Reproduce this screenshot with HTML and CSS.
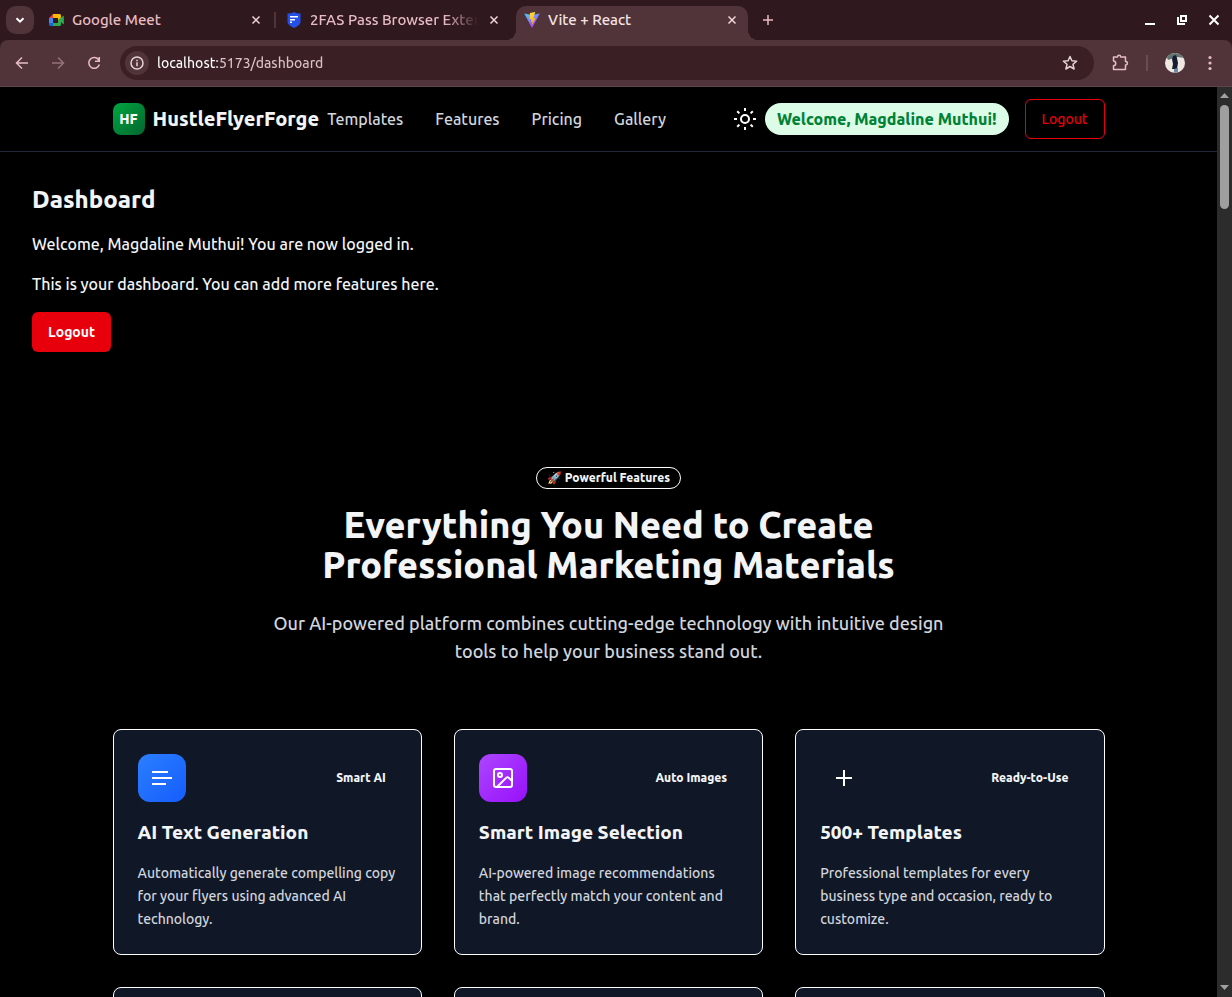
FILE: index.html
```html
<!DOCTYPE html>
<html lang="en">
<head>
<meta charset="utf-8">
<title>Vite + React</title>
<link rel="stylesheet" href="styles.css">
</head>
<body>
<div class="window">
  <div class="tabstrip">
    <button class="tab-search" aria-label="Search tabs"><svg width="12" height="12" viewBox="0 0 12 12"><path d="M2.500 4.200 6 7.700 9.500 4.200" class="line bold"/></svg></button>
    <div class="tabs" role="tablist">
      <div class="tab" role="tab">
        <svg width="16" height="16" viewBox="0 0 16 16"><path fill="#ea4335" d="M1 6 5 2v4z"/><path fill="#fbbc04" d="M5 2h6.500q1.500 0 1.500 1.500V7l-3 2V6H5z"/><path fill="#4285f4" d="M1 6h4v5H1z"/><path fill="#1967d2" d="M1 11h4v3H2.500Q1 14 1 12.500z"/><path fill="#34a853" d="M5 11h5V8l3-2.500V12.500Q13 14 11.500 14H5zM13 6l2-2q.8-.5.8.5v7q0 1-.8.5l-2-2z"/></svg>
        <span class="tab-title">Google Meet</span>
        <button class="tab-close" aria-label="Close tab"><svg width="16" height="16" viewBox="0 0 16 16"><path class="line" d="m4.500 4.500 7 7m0-7-7 7"/></svg></button>
      </div>
      <div class="tab divided" role="tab">
        <svg width="16" height="16" viewBox="0 0 16 16"><path fill="#2450e8" d="M8 0q2 1.500 6.500 1.500V10q0 3-6.500 6-6.500-3-6.500-6V1.500Q6 1.500 8 0z"/><path fill="#fff" d="M4 4h8v1.500H4zM4 7h5v1.500H4zM4 9.500h2V11H4z"/></svg>
        <span class="tab-title faded">2FAS Pass Browser Extension</span>
        <button class="tab-close" aria-label="Close tab"><svg width="16" height="16" viewBox="0 0 16 16"><path class="line" d="m4.500 4.500 7 7m0-7-7 7"/></svg></button>
      </div>
      <div class="tab active" role="tab" aria-selected="true">
        <svg width="16" height="16" viewBox="0 0 16 16"><defs><linearGradient id="va" x1="0" y1="0" x2=".6" y2="1"><stop offset="0" stop-color="#41d1ff"/><stop offset="1" stop-color="#bd34fe"/></linearGradient><linearGradient id="vb" x1="0" y1="0" x2="0" y2="1"><stop offset="0" stop-color="#ffdd35"/><stop offset="1" stop-color="#ffa800"/></linearGradient></defs><path fill="url(#va)" d="M.3 1.500 8 3l7.800-1.500L8 16z"/><path fill="url(#vb)" d="M11.300 0 6 1l-.6 6.300 2-.4L7 10l1.300-.4L8 13l3.500-7-2.200.3z"/></svg>
        <span class="tab-title">Vite + React</span>
        <button class="tab-close" aria-label="Close tab"><svg width="16" height="16" viewBox="0 0 16 16"><path class="line" d="m4.500 4.500 7 7m0-7-7 7"/></svg></button>
      </div>
    </div>
    <button class="tab-new" aria-label="New tab"><svg width="16" height="16" viewBox="0 0 16 16"><path class="line" d="M8 3v10M3 8h10"/></svg></button>
    <div class="window-buttons">
      <button aria-label="Minimize"><svg width="16" height="16" viewBox="0 0 16 16"><path fill="#fff" d="M3 11h10v2H3z"/></svg></button>
      <button aria-label="Restore"><svg width="16" height="16" viewBox="0 0 16 16"><path fill="none" stroke="#fff" stroke-width="2" d="M7 4h5v5H7z"/><path fill="#fff" d="M3 5h2v6h6v2H3z"/></svg></button>
      <button aria-label="Close"><svg width="16" height="16" viewBox="0 0 16 16"><path stroke="#fff" stroke-width="2" d="m3.500 3.500 9 9m0-9-9 9"/></svg></button>
    </div>
  </div>
  <div class="toolbar">
    <div class="history">
      <button aria-label="Back"><svg width="16" height="16" viewBox="0 0 16 16"><path class="line" d="M14 8H2.500m5.500-5.500L2.500 8 8 13.500"/></svg></button>
      <button aria-label="Forward" disabled><svg width="16" height="16" viewBox="0 0 16 16"><path class="line" d="M2 8h11.500M8 2.500 13.500 8 8 13.500"/></svg></button>
      <button aria-label="Reload"><svg width="16" height="16" viewBox="0 0 16 16"><path class="line" d="M12.800 5A5.400 5.400 0 1 0 13.400 9.500M13.300 2v4.200H9"/></svg></button>
    </div>
    <div class="omnibox">
      <button class="site-info" aria-label="Site information"><svg width="16" height="16" viewBox="0 0 16 16"><circle class="line" cx="8" cy="8" r="6"/><path class="line" d="M8 7.300V11.200M8 4.800v1.500"/></svg></button>
      <input class="address" type="text" aria-label="Address" value="localhost:5173/dashboard">
      <button aria-label="Bookmark this page"><svg width="16" height="16" viewBox="0 0 16 16"><path class="line" stroke-linejoin="round" d="m8 1.500 1.900 4.300 4.700.4L11 9.300l1.100 4.700L8 11.500 3.900 14 5 9.300 1.400 6.200l4.700-.4z"/></svg></button>
    </div>
    <div class="toolbar-end">
      <button aria-label="Extensions"><svg width="18" height="18" viewBox="0 0 18 18"><path class="line" stroke-linejoin="round" d="M2.500 3H6.500C6.500.8 9.700.8 9.700 3H14.500V7.600C17 7.600 17 11 14.500 11V15.500H2.500V11.700C5.500 11.500 5.500 7.300 2.500 7z"/></svg></button>
      <span class="toolbar-rule"></span>
      <button aria-label="Profile"><svg width="20" height="20" viewBox="0 0 20 20"><defs><clipPath id="face"><circle cx="10" cy="10" r="10"/></clipPath></defs><g clip-path="url(#face)"><path fill="#efe8e1" d="M0 0h20v20H0z"/><path fill="#62746f" d="M0 0h20v5L12 4 3 7z"/><path fill="#161d31" d="m8 3 3-1 1 3 1 5-1 6H7l1-5-1-5z"/><path fill="#708ba0" d="m9 16 4-1v5H9z"/></g></svg></button>
      <button aria-label="Menu"><svg width="16" height="16" viewBox="0 0 16 16"><g fill="#e8bcc4"><circle cx="8" cy="2.500" r="1.600"/><circle cx="8" cy="8" r="1.600"/><circle cx="8" cy="13.500" r="1.600"/></g></svg></button>
    </div>
  </div>
  <div class="viewport">
    <div class="page">
      <header class="site-header">
        <div class="container header-row">
          <a class="brand" href="#"><span class="brand-mark">HF</span><span class="brand-name">HustleFlyerForge</span></a>
          <nav class="site-nav"><a href="#">Templates</a><a href="#">Features</a><a href="#">Pricing</a><a href="#">Gallery</a></nav>
          <div class="account">
            <button class="theme" aria-label="Toggle theme"><svg width="24" height="24" viewBox="0 0 24 24" fill="none" stroke="#fff" stroke-width="2"><circle cx="12" cy="12" r="4"/><path d="M12 1v3M12 20v3M1 12h3M20 12h3M4.200 4.200l2.200 2.200M17.600 17.600l2.200 2.200M4.200 19.800l2.200-2.200M17.600 6.400l2.200-2.200"/></svg></button>
            <span class="greeting">Welcome, Magdaline Muthui!</span>
            <button class="btn outline">Logout</button>
          </div>
        </div>
      </header>
      <main>
        <section class="dashboard">
          <h2>Dashboard</h2>
          <p>Welcome, Magdaline Muthui! You are now logged in.</p>
          <p>This is your dashboard. You can add more features here.</p>
          <button class="btn solid">Logout</button>
        </section>
        <section class="features container">
          <div class="badge">🚀 Powerful Features</div>
          <h2>Everything You Need to Create Professional Marketing Materials</h2>
          <p class="lead">Our AI-powered platform combines cutting-edge technology with intuitive design tools to help your business stand out.</p>
          <div class="cards">
            <article class="card">
              <div class="card-top"><span class="card-icon blue"><svg width="24" height="24" viewBox="0 0 24 24"><path stroke="#fff" stroke-width="2" d="M2 6h16M2 12h20M2 18h14"/></svg></span><span class="tag">Smart AI</span></div>
              <h3>AI Text Generation</h3>
              <p>Automatically generate compelling copy for your flyers using advanced AI technology.</p>
            </article>
            <article class="card">
              <div class="card-top"><span class="card-icon purple"><svg width="24" height="24" viewBox="0 0 24 24" fill="none" stroke="#fff" stroke-width="2" stroke-linejoin="round"><rect x="3" y="3" width="18" height="18" rx="2"/><circle cx="9" cy="9" r="2"/><path d="m21 15-3.100-3.100a2 2 0 0 0-2.800 0L6 21"/></svg></span><span class="tag">Auto Images</span></div>
              <h3>Smart Image Selection</h3>
              <p>AI-powered image recommendations that perfectly match your content and brand.</p>
            </article>
            <article class="card">
              <div class="card-top"><span class="card-icon"><svg width="24" height="24" viewBox="0 0 24 24"><path stroke="#fff" stroke-width="2" d="M12 4v16M4 12h16"/></svg></span><span class="tag">Ready-to-Use</span></div>
              <h3>500+ Templates</h3>
              <p>Professional templates for every business type and occasion, ready to customize.</p>
            </article>
            <article class="card next"></article>
            <article class="card next"></article>
            <article class="card next"></article>
          </div>
        </section>
      </main>
    </div>
    <div class="scrollbar">
      <svg width="9" height="5" viewBox="0 0 9 5"><path fill="#a0a0a0" d="M4.500 0 9 5H0z"/></svg>
      <div class="track"><div class="thumb"></div></div>
      <svg width="9" height="5" viewBox="0 0 9 5"><path fill="#a0a0a0" d="M0 0h9L4.500 5z"/></svg>
    </div>
  </div>
</div>
</body>
</html>
```
FILE: styles.css
```css
* { box-sizing: border-box; margin: 0; }
body { font-family: Ubuntu, "Noto Sans", sans-serif; font-size: 16px; font-weight: 500; line-height: 24px; color: #f3f4f6; background: #000; }
button { font: inherit; color: inherit; border: 0; padding: 0; background: none; display: flex; align-items: center; justify-content: center; }
a { color: inherit; text-decoration: none; }
svg { flex: none; display: block; }
.line { fill: none; stroke: currentColor; stroke-width: 1.5; }
.bold { stroke-width: 2; }
.window { height: 100vh; display: flex; flex-direction: column; overflow: hidden; background: #30191e; }

/* Browser frame */
.tabstrip { display: flex; height: 40px; padding: 6px 10px 0 6px; color: #e8bcc4; flex: none; }
.tab-search { width: 28px; height: 28px; border-radius: 10px; background: #503439; color: #fff; margin-right: 6px; }
.tabs { display: flex; gap: 6px; }
.tab { position: relative; display: flex; align-items: center; gap: 8px; width: 232px; height: 34px; padding: 0 8px 6px; font-size: 15px; }
.tab-title { flex: 1; overflow: hidden; white-space: nowrap; }
.faded { mask-image: linear-gradient(to right, #000 80%, transparent); }
.divided::before { content: ""; position: absolute; left: -4px; top: 6px; width: 2px; height: 16px; background: #503439; }
.tab.active { background: #503439; color: #f5e3e6; border-radius: 10px 10px 0 0; }
.tab.active::before, .tab.active::after { content: ""; position: absolute; bottom: 0; width: 10px; height: 10px; }
.tab.active::before { left: -10px; background: radial-gradient(circle at 0 0, transparent 10px, #503439 10px); }
.tab.active::after { right: -10px; background: radial-gradient(circle at 100% 0, transparent 10px, #503439 10px); }
.tab-close { width: 16px; height: 16px; color: #f0d4d9; }
.tab-new { width: 28px; height: 28px; margin-left: 6px; }
.window-buttons { display: flex; gap: 16px; height: 28px; margin-left: auto; }
.toolbar { display: flex; align-items: center; height: 47px; flex: none; padding: 0 14px; background: #503439; border-bottom: 1px solid #5c4448; color: #e8bcc4; border-radius: 8px 8px 0 0; }
.history { display: flex; gap: 20px; margin-right: 18px; }
.history button:disabled { opacity: .45; }
.omnibox { display: flex; align-items: center; flex: 1; height: 34px; padding: 0 16px 0 5px; border-radius: 17px; background: #3a2024; color: #e6d3d6; }
.site-info { width: 24px; height: 24px; border-radius: 50%; background: #503439; }
.address { flex: 1; min-width: 0; margin-left: 8px; padding: 0; border: 0; outline: 0; font: inherit; font-size: 14px; color: transparent; background: linear-gradient(to right, #fff 60px, #d9c3c7 60px) text; }
.toolbar-end { display: flex; align-items: center; gap: 17px; margin-left: 17px; }
.toolbar-rule { width: 2px; height: 16px; background: #6b4a50; }

/* Page */
.viewport { flex: 1; min-height: 0; display: flex; background: #000; }
.page { flex: 1; min-width: 0; overflow: hidden; }
.container { width: 100%; max-width: 1024px; margin: 0 auto; padding: 0 16px; }
.site-header { border-bottom: 1px solid #1e2939; }
.header-row { display: flex; align-items: center; height: 64px; }
.brand { display: flex; align-items: center; gap: 8px; margin-right: 8px; }
.brand-mark { display: grid; place-items: center; width: 32px; height: 32px; border-radius: 8px; background: linear-gradient(135deg, #00a63e, #016630); color: #fff; font-size: 14px; font-weight: 800; }
.brand-name { font-size: 20px; font-weight: 800; }
.site-nav { display: flex; gap: 32px; font-weight: 550; color: #d1d5dc; }
.account { display: flex; align-items: center; margin-left: auto; white-space: nowrap; }
.theme { margin-right: 8px; }
.greeting { height: 32px; padding: 4px 12px; margin-right: 16px; border-radius: 16px; background: #dcfce7; color: #008236; font-weight: 800; }
.btn { height: 40px; padding: 0 16px; border-radius: 6px; font-size: 14px; font-weight: 500; }
.outline { border: 1px solid #e7000b; color: #e7000b; }
.solid { background: #e7000b; color: #fff; font-weight: 600; }
.dashboard { padding: 32px; }
.dashboard h2 { font-size: 24px; line-height: 32px; font-weight: 800; }
.dashboard h2, .dashboard p { margin-bottom: 16px; }
.features { padding-top: 83px; text-align: center; }
.badge { width: fit-content; height: 22px; margin: 0 auto 16px; padding: 0 10px; border: 1px solid #fff; border-radius: 11px; font-size: 12px; line-height: 20px; font-weight: 800; }
.features h2 { max-width: 672px; margin: 0 auto 24px; font-size: 36px; line-height: 40px; font-weight: 800; }
.lead { max-width: 672px; margin: 0 auto 64px; font-size: 18px; line-height: 28px; color: #d1d5dc; }
.cards { display: grid; grid-template-columns: repeat(3, 1fr); gap: 32px; text-align: left; }
.card { padding: 24px 24px 23px; border: 1px solid #fff; border-radius: 8px; background: #101828; }
.card-top { display: flex; align-items: center; justify-content: space-between; margin-bottom: 16px; }
.card-icon { display: grid; place-items: center; width: 48px; height: 48px; border-radius: 12px; }
.blue { background: linear-gradient(135deg, #2b7fff, #155dfc); }
.purple { background: linear-gradient(135deg, #ad46ff, #9810fa); }
.tag { padding-right: 11px; font-size: 12px; font-weight: 800; }
.card h3 { margin-bottom: 16px; font-size: 19px; line-height: 28px; font-weight: 800; }
.card p { font-size: 14px; line-height: 23px; color: #d1d5dc; }
.next { min-height: 226px; }
.scrollbar { display: flex; flex-direction: column; align-items: center; width: 15px; padding: 6px 0 7px; background: #2c2c2c; }
.track { flex: 1; width: 9px; padding-top: 7px; }
.thumb { height: 104px; border-radius: 5px; background: #9f9f9f; }
```
